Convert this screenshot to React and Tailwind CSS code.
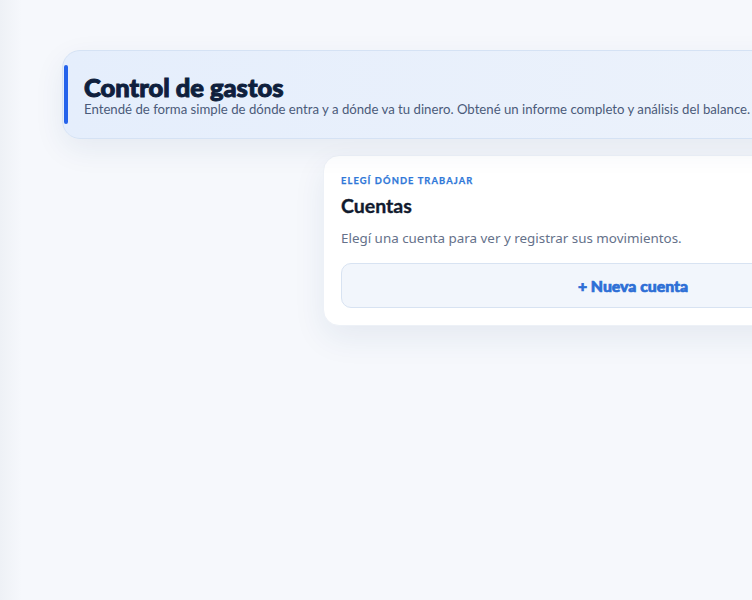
import React from 'react';

function Header() {
  return (
    <div className="relative w-[940px] h-[89px] rounded-[18px] border border-[#d5e2f4] bg-gradient-to-r from-[#e5eefc] to-[#eef3fb] shadow-[0_10px_30px_rgba(30,60,120,0.08)] flex flex-col justify-center pl-[21px]">
      <span className="absolute left-[1px] top-[14px] bottom-[14px] w-[4px] rounded-full bg-[#2563eb]"></span>
      <h1 className="font-['Lato',sans-serif] font-black text-[25.5px] leading-[27px] text-[#0f1f3d] [-webkit-text-stroke:1px_#0f1f3d] mt-[1px]">Control de gastos</h1>
      <p className="font-['Lato',sans-serif] text-[13.2px] leading-[16px] text-[#4b5b7a]">
        Entendé de forma simple de dónde entra y a dónde va tu dinero. Obtené un informe completo y análisis del balance.
      </p>
    </div>
  );
}

function AccountsCard() {
  return (
    <div className="w-[620px] rounded-[16px] bg-white border border-[#edf1f7] shadow-[0_12px_32px_rgba(30,60,120,0.08)] px-[17px] pt-[19px] pb-[17px]">
      <div className="font-['Lato',sans-serif] font-bold text-[9.3px] leading-[12px] tracking-[0.12em] text-[#2f78d8] [-webkit-text-stroke:0.25px_#2f78d8]">ELEGÍ DÓNDE TRABAJAR</div>
      <h2 className="font-['Lato',sans-serif] font-bold text-[19.5px] leading-[24px] text-[#111a2e] [-webkit-text-stroke:0.35px_#111a2e] mt-[7px]">Cuentas</h2>
      <p className="font-['Noto_Sans',sans-serif] text-[13.4px] leading-[18px] text-[#65718a] mt-[11px]">
        Elegí una cuenta para ver y registrar sus movimientos.
      </p>
      <button className="mt-[16px] w-full h-[45px] rounded-[10px] border border-[#d8e3f2] bg-[#f2f6fc] font-['Lato',sans-serif] font-black text-[15.8px] text-[#2d6fd6] [-webkit-text-stroke:0.7px_#2d6fd6]">
        + Nueva cuenta
      </button>
    </div>
  );
}

export default function App() {
  return (
    <div className="w-screen min-h-screen overflow-hidden bg-[#f6f8fc] flex">
      <div className="w-[22px] shrink-0 bg-gradient-to-r from-[#eef1f6] to-[#f6f8fc]"></div>
      <main className="flex-1 pt-[50px] pl-[40px] flex flex-col gap-[16px]">
        <Header />
        <div className="flex">
          <div className="w-[261px] shrink-0"></div>
          <AccountsCard />
        </div>
      </main>
    </div>
  );
}
